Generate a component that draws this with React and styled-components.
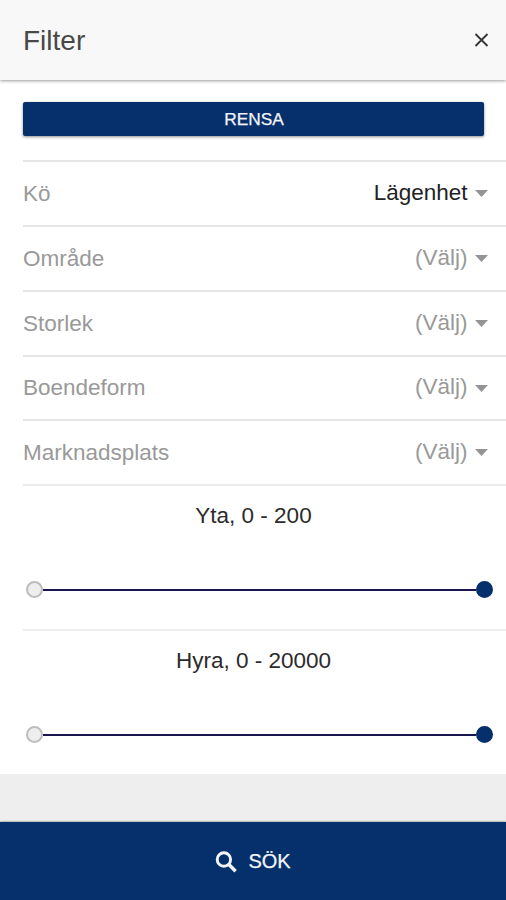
import React from "react";
import styled, { createGlobalStyle } from "styled-components";

const navy = "#06306b";

const GlobalStyle = createGlobalStyle`
  * { box-sizing: border-box; }
  body {
    margin: 0;
    background: #eeeeee;
    font-family: "Liberation Sans", Arial, sans-serif;
  }
  button { font-family: inherit; border: 0; padding: 0; cursor: pointer; }
`;

const Screen = styled.div`
  width: 100%;
  height: 100vh;
  display: flex;
  flex-direction: column;
  overflow: hidden;
`;

const Header = styled.header`
  flex: none;
  z-index: 1;
  height: 80px;
  padding: 0 16px 0 23px;
  display: flex;
  align-items: center;
  justify-content: space-between;
  background: #f8f8f8;
  box-shadow: 0 1px 3px rgba(0, 0, 0, 0.4);
`;

const Title = styled.h1`
  margin: 2px 0 0;
  font-size: 28px;
  line-height: 32px;
  font-weight: 400;
  color: #484848;
`;

const CloseButton = styled.button`
  display: flex;
  background: none;
  color: #333;
`;

const Panel = styled.main`
  flex: none;
  height: 694px;
  padding: 22px 0 0 23px;
  background: #fff;
`;

const ClearButton = styled.button`
  display: block;
  width: 461px;
  height: 34px;
  margin-bottom: 24px;
  padding: 1px 0 0 1px;
  border-radius: 2px;
  background: ${navy};
  color: #f4f5fb;
  font-size: 17.3px;
  line-height: 33px;
  -webkit-text-stroke: 0.25px currentColor;
  box-shadow: 0 1px 3px rgba(0, 0, 0, 0.45);
`;

const Row = styled.div`
  height: ${(p) => p.$height}px;
  border-top: 2px solid #e6e6e6;
  padding-right: 18px;
  display: flex;
  align-items: center;
  justify-content: space-between;
  font-size: 22.5px;
`;

const Label = styled.span`
  color: #999;
`;

const Value = styled.span`
  display: flex;
  align-items: center;
  gap: 7.5px;
  margin-top: -2px;
  color: ${(p) => (p.$selected ? "#222" : "#999")};
`;

const Caret = styled.svg`
  width: 13px;
  height: 7px;
  margin-top: 2px;
  fill: #949494;
`;

const RangeSection = styled.section`
  height: 145px;
  padding: 17px 13px 0 3px;
  border-top: 2px solid #ececec;
`;

const RangeTitle = styled.h2`
  margin: 0 0 52px -26px;
  width: 507px;
  text-align: center;
  font-size: 22.5px;
  line-height: 26px;
  font-weight: 400;
  color: #2b2b2b;
`;

const Slider = styled.div`
  height: 17px;
  display: flex;
  align-items: center;
`;

const Track = styled.div`
  flex: 1;
  height: 2px;
  background: #18154f;
`;

const Knob = styled.span`
  width: 17px;
  height: 17px;
  border-radius: 50%;
  border: 2px solid ${(p) => (p.$active ? navy : "#bdbdbd")};
  background: ${(p) => (p.$active ? navy : "#eeeeee")};
`;

const SearchButton = styled.button`
  flex: none;
  height: 78px;
  margin-top: auto;
  display: flex;
  align-items: center;
  justify-content: center;
  gap: 11px;
  background: ${navy};
  color: #f4f5fb;
  font-size: 20px;
  -webkit-text-stroke: 0.25px currentColor;
  box-shadow: 0 0 2px rgba(0, 0, 0, 0.6);
`;

const SearchIcon = styled.svg`
  width: 22px;
  height: 22px;
  margin-top: 2px;
  fill: none;
  stroke: currentColor;
`;

const fields = [
  { label: "Kö", value: "Lägenhet", selected: true, height: 65 },
  { label: "Område", value: "(Välj)", height: 65 },
  { label: "Storlek", value: "(Välj)", height: 65 },
  { label: "Boendeform", value: "(Välj)", height: 64 },
  { label: "Marknadsplats", value: "(Välj)", height: 65 },
];

const ranges = ["Yta, 0 - 200", "Hyra, 0 - 20000"];

export default function App() {
  return (
    <Screen>
      <GlobalStyle />
      <Header>
        <Title>Filter</Title>
        <CloseButton aria-label="Stäng">
          <svg width="17" height="16" viewBox="0 0 17 16">
            <path d="M2.5 2L14.5 14M14.5 2L2.5 14" stroke="currentColor" strokeWidth="1.8" />
          </svg>
        </CloseButton>
      </Header>
      <Panel>
        <ClearButton>RENSA</ClearButton>
        {fields.map((f) => (
          <Row key={f.label} $height={f.height}>
            <Label>{f.label}</Label>
            <Value $selected={f.selected}>
              {f.value}
              <Caret viewBox="0 0 13 7">
                <path d="M0 0H13L6.5 7Z" />
              </Caret>
            </Value>
          </Row>
        ))}
        {ranges.map((title) => (
          <RangeSection key={title}>
            <RangeTitle>{title}</RangeTitle>
            <Slider>
              <Knob />
              <Track />
              <Knob $active />
            </Slider>
          </RangeSection>
        ))}
      </Panel>
      <SearchButton>
        <SearchIcon viewBox="0 0 22 22">
          <circle cx="8.9" cy="8.5" r="6.7" strokeWidth="2.9" />
          <path d="M13.4 13L20.6 20.2" strokeWidth="3.5" />
        </SearchIcon>
        SÖK
      </SearchButton>
    </Screen>
  );
}
